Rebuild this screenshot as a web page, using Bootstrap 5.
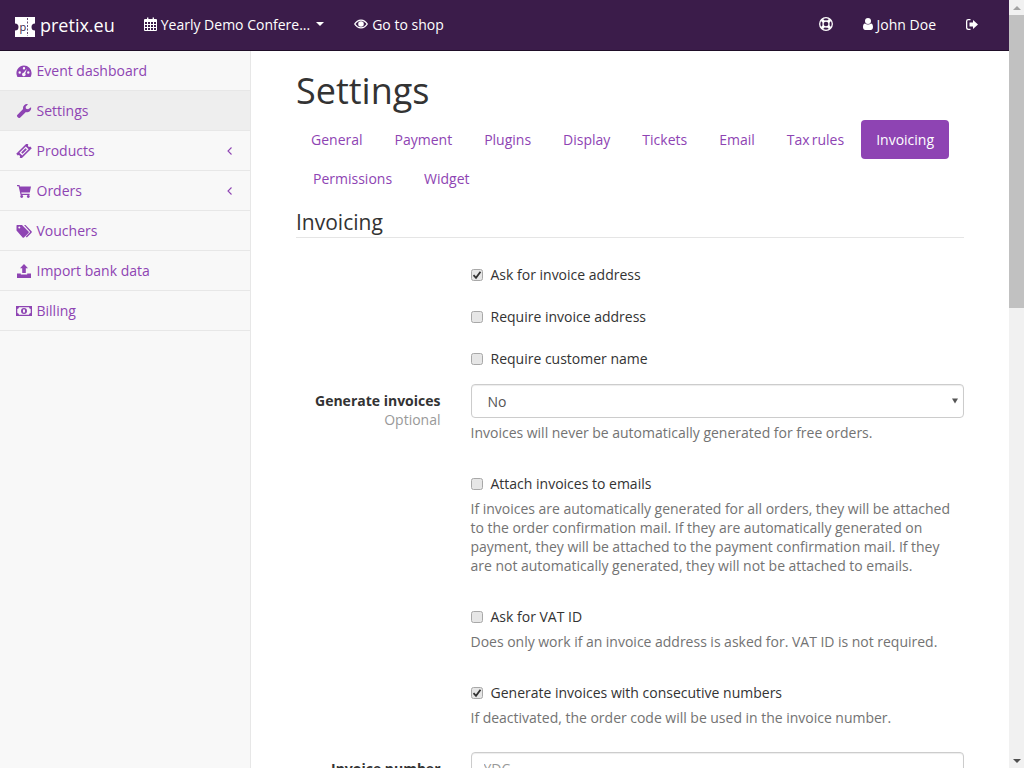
<!DOCTYPE html>
<html lang="en">
<head>
  <meta charset="UTF-8" />
  <meta name="viewport" content="width=device-width, initial-scale=1" />
  <title>Settings :: pretix.eu</title>
  <link href="https://cdn.jsdelivr.net/npm/bootstrap@5.3.3/dist/css/bootstrap.min.css" rel="stylesheet" />
  <style>
    html, body {
      height: 768px;
      overflow: hidden;
    }

    body {
      font-family: "Open Sans", "Liberation Sans", sans-serif;
      font-size: 14px;
      line-height: 19px;
      color: #333;
    }

    a {
      color: #8e44b3;
      text-decoration: none;
    }

    .no-squeeze {
      min-width: 0;
      min-height: 0;
    }

    /* top bar */
    .top-bar {
      height: 51px;
      padding: 0;
      background-color: #3b1c4a;
      border-bottom: 1px solid #1f0e28;
      flex-wrap: nowrap;
    }

    .top-bar .navbar-brand {
      display: flex;
      align-items: center;
      gap: 5px;
      height: 50px;
      margin: 0;
      padding: 0 14px 0 15px;
      font-size: 18px;
      line-height: 50px;
      color: #fff;
    }

    .brand-mark {
      margin-top: 4px;
    }

    .top-bar .nav-link {
      display: flex;
      align-items: center;
      height: 50px;
      padding: 0 15px 2px;
      color: #fff;
      font-size: 14px;
    }

    .top-bar svg {
      fill: #fff;
      flex: none;
    }

    .top-right {
      margin-right: 16px;
    }

    .user-glyph {
      margin-right: 4px;
    }

    .down-caret {
      width: 0;
      height: 0;
      margin-left: 6px;
      border-top: 4px solid #fff;
      border-left: 4px solid transparent;
      border-right: 4px solid transparent;
    }

    /* side menu */
    .side-menu {
      width: 251px;
      flex: none;
      background-color: #f8f8f8;
      border-right: 1px solid #e7e7e7;
    }

    .side-item {
      display: flex;
      align-items: center;
      height: 40px;
      padding: 0 15px 0 16px;
      border-bottom: 1px solid #e7e7e7;
    }

    .side-item svg {
      width: 16px;
      height: 14px;
      margin-right: 4.5px;
      fill: #8e44b3;
      flex: none;
    }

    .side-item.is-current {
      background-color: #eee;
    }

    .side-item svg.side-chevron {
      width: 5px;
      height: 8px;
      margin: 0 3px 0 auto;
      fill: none;
      stroke: #8e44b3;
      stroke-width: 1.1;
    }

    /* main column */
    .main-area {
      flex: 1;
      min-width: 0;
      padding: 0 45px;
    }

    .page-title {
      margin: 20px 0 9px;
      font-size: 36px;
      line-height: 39.6px;
      font-weight: 400;
    }

    .tab-pills {
      margin-bottom: 10px;
      word-spacing: -1.5px;
    }

    .tab-pills .nav-item + .nav-item {
      margin-left: 2px;
    }

    .tab-pills .nav-link {
      padding: 10px 15px;
      color: #8e44b3;
      border-radius: 4px;
      font-size: 14px;
    }

    .tab-pills .nav-link.active {
      background-color: #8e44b3;
      color: #fff;
    }

    .form-legend {
      margin-bottom: 20px;
      font-size: 21px;
      line-height: 29px;
      border-bottom: 1px solid #e5e5e5;
    }

    .form-line {
      --bs-gutter-x: 30px;
      margin-bottom: 15px;
    }

    .line-label {
      padding-top: 7px;
      text-align: right;
      font-weight: 700;
    }

    .line-label span {
      display: block;
      font-weight: 400;
      color: #999;
    }

    .tick-line {
      display: flex;
      align-items: flex-start;
      min-height: 27px;
      padding-top: 7px;
    }

    .tick-line input {
      appearance: none;
      width: 12px;
      height: 12px;
      margin: 4px 7.5px 0 .5px;
      background: #e6e6e6 no-repeat center;
      border: 1px solid #a8a8a8;
      border-radius: 2.5px;
      flex: none;
    }

    .tick-line input:checked {
      background-image: url("data:image/svg+xml,%3Csvg xmlns='http://www.w3.org/2000/svg' viewBox='0 0 10 10'%3E%3Cpath d='M1.500 5.200 4 7.800 8.500 1.800' fill='none' stroke='%23333' stroke-width='1.800'/%3E%3C/svg%3E");
      background-size: 10px 10px;
    }

    .help-line {
      margin: 5px 0 10px;
      color: #737373;
      word-spacing: -.1px;
    }

    .field-box {
      height: 34px;
      padding: 6px 12px;
      font-size: 14px;
      line-height: 19px;
      color: #555;
      border: 1px solid #ccc;
      border-radius: 4px;
      box-shadow: inset 0 1px 1px rgba(0, 0, 0, .075);
    }

    select.field-box {
      appearance: none;
      padding: 7px 12px 5px 16px;
      background: #fff url("data:image/svg+xml,%3Csvg xmlns='http://www.w3.org/2000/svg' viewBox='0 0 6 6'%3E%3Cpath d='M0 .5h6L3 5.500z' fill='%23555'/%3E%3C/svg%3E") no-repeat right 5px center / 6px 6px;
    }

    .field-box::placeholder {
      color: #999;
    }

    /* scrollbar */
    .fake-scroll {
      width: 15px;
      flex: none;
      display: flex;
      flex-direction: column;
      align-items: center;
      background-color: #f1f1f1;
    }

    .fake-scroll .scroll-end {
      height: 15px;
      width: 100%;
      display: flex;
      align-items: center;
      justify-content: center;
      flex: none;
    }

    .fake-scroll .scroll-thumb {
      width: 100%;
      height: 293px;
      flex: none;
      background-color: #c1c1c1;
    }

    .scroll-end.up::before,
    .scroll-end.down::before {
      content: "";
      border-left: 4px solid transparent;
      border-right: 4px solid transparent;
    }

    .scroll-end.up::before {
      border-bottom: 4px solid #a3a3a3;
    }

    .scroll-end.down::before {
      border-top: 4px solid #505050;
    }
  </style>
</head>
<body>

  <div class="d-flex vh-100">
    <div class="flex-grow-1 d-flex flex-column no-squeeze">

      <!-- Top bar -->
      <nav class="navbar top-bar">
        <a class="navbar-brand" href="#">
          <svg class="brand-mark" width="20" height="20" viewBox="0 0 20 20">
            <path d="M0 0h20v6.500a3.500 3.500 0 0 0 0 7V20H0v-6.500a3.500 3.500 0 0 0 0-7z"/>
            <text x="4.500" y="14" font-size="11" font-family="'Open Sans', sans-serif" fill="#3b1c4a">p</text>
            <path d="M12.500 1v18" fill="none" stroke="#3b1c4a" stroke-width=".8" stroke-dasharray="2 1.500"/>
          </svg>
          pretix.eu
        </a>
        <ul class="navbar-nav flex-row me-auto">
          <li class="nav-item">
            <a class="nav-link" href="#">
              <svg class="me-1" width="13" height="14" viewBox="0 0 13 14"><path d="M1 2h2V.6h1.400V2h4.200V.6H10V2h2a1 1 0 0 1 1 1v10a1 1 0 0 1-1 1H1a1 1 0 0 1-1-1V3a1 1 0 0 1 1-1zm0 3v2h2V5zm3 0v2h2V5zm3 0v2h2V5zm3 0v2h2V5zM1 8v2h2V8zm3 0v2h2V8zm3 0v2h2V8zm3 0v2h2V8zM1 11v2h2v-2zm3 0v2h2v-2zm3 0v2h2v-2zm3 0v2h2v-2z" fill-rule="evenodd"/></svg>
              Yearly Demo Confere...
              <span class="down-caret"></span>
            </a>
          </li>
          <li class="nav-item">
            <a class="nav-link" href="#">
              <svg class="me-1" width="14" height="12" viewBox="0 0 14 12"><path d="M7 1.500c3 0 5.500 1.800 7 4.500-1.500 2.700-4 4.500-7 4.500S1.500 8.700 0 6c1.500-2.700 4-4.500 7-4.500zm0 1.200C4.800 2.700 2.800 4 1.500 6 2.800 8 4.800 9.300 7 9.300S11.200 8 12.500 6C11.200 4 9.200 2.700 7 2.700zM7 3.200A2.800 2.800 0 1 1 7 8.800 2.800 2.800 0 0 1 7 3.200z" fill-rule="evenodd"/></svg>
              Go to shop
            </a>
          </li>
        </ul>
        <ul class="navbar-nav flex-row top-right">
          <li class="nav-item">
            <a class="nav-link" href="#">
              <svg width="14" height="14" viewBox="0 0 14 14">
                <g fill="none" stroke="#fff">
                  <circle cx="7" cy="7" r="6.300" stroke-width="1.300"/>
                  <circle cx="7" cy="7" r="3" stroke-width="1.300"/>
                  <path d="M2.800 2.800 5 5M11.200 2.800 9 5M2.800 11.200 5 9M11.200 11.200 9 9" stroke-width="3"/>
                </g>
              </svg>
            </a>
          </li>
          <li class="nav-item">
            <a class="nav-link" href="#">
              <svg class="user-glyph" width="10" height="12" viewBox="0 0 10 12"><circle cx="5" cy="3" r="3"/><path d="M2 5.500c.8.700 1.800 1 3 1s2.200-.3 3-1c1.300.2 2 1.500 2 3.500 0 1.800-1 3-2.300 3H2.300C1 12 0 10.800 0 9c0-2 .7-3.300 2-3.500z"/></svg>
              John Doe
            </a>
          </li>
          <li class="nav-item">
            <a class="nav-link" href="#">
              <svg width="12" height="11" viewBox="0 0 12 11"><path d="M4.500 0v1.300H2.400c-.6 0-1.100.5-1.100 1.100v6.200c0 .6.500 1.100 1.100 1.100h2.100V11H2.300A2.300 2.300 0 0 1 0 8.700V2.300A2.300 2.300 0 0 1 2.300 0z"/><path d="M7 1l5 4.500L7 10V7.500H3.500v-4H7z"/></svg>
            </a>
          </li>
        </ul>
      </nav>

      <div class="d-flex flex-grow-1 no-squeeze">

        <!-- Side menu -->
        <div class="side-menu">
          <a class="side-item" href="#">
            <svg viewBox="0 0 16 14"><path d="M8 1.500a7.600 7.600 0 0 1 7.600 7.600c0 1.300-.3 2.500-.9 3.600-.1.200-.3.300-.5.300H1.800c-.2 0-.4-.1-.5-.3A7.600 7.600 0 0 1 8 1.500zM8 3a1.200 1.200 0 1 0 0 2.400A1.200 1.200 0 0 0 8 3zM3.700 7.300a1.200 1.200 0 1 0 0 2.400 1.200 1.200 0 0 0 0-2.400zm8.600 0a1.200 1.200 0 1 0 0 2.400 1.200 1.200 0 0 0 0-2.400zM10.800 5 7.600 8.800a1.700 1.700 0 1 0 1.600.7z" fill-rule="evenodd"/></svg>
            Event dashboard
          </a>
          <a class="side-item is-current" href="#">
            <svg viewBox="0 0 16 14"><path d="M15 3.200c.1.400.2.700.2 1a4 4 0 0 1-5.300 3.700L4.300 13.500a1.500 1.500 0 0 1-2.200 0l-.6-.6a1.500 1.500 0 0 1 0-2.200L7.100 5A4 4 0 0 1 12 .2L9.600 2.700l.4 2.100 2.100.5z"/></svg>
            Settings
          </a>
          <a class="side-item" href="#">
            <svg viewBox="0 0 16 14"><g transform="rotate(-45 8 7)"><path d="M.5 3.500h15v2.200a1.300 1.300 0 0 0 0 2.600v2.200H.5V8.300a1.300 1.300 0 0 0 0-2.600zM3.500 5v4h9V5z" fill-rule="evenodd"/><path d="M5 6h6v2H5z"/></g></svg>
            Products
            <svg class="side-chevron" viewBox="0 0 5 8"><path d="M4.500.5 1 4l3.500 3.500"/></svg>
          </a>
          <a class="side-item" href="#">
            <svg viewBox="0 0 16 14"><path d="M1 1h2.500l.4 1.500H15l-1.200 6H5.300l.3 1.300h8v1.200H4.600L2.600 2.200H1z"/><circle cx="5.700" cy="12.500" r="1.400"/><circle cx="12.300" cy="12.500" r="1.400"/></svg>
            Orders
            <svg class="side-chevron" viewBox="0 0 5 8"><path d="M4.500.5 1 4l3.500 3.500"/></svg>
          </a>
          <a class="side-item" href="#">
            <svg viewBox="0 0 16 14"><path d="M1 1h5l6.500 6.500a1 1 0 0 1 0 1.400L8 13.400a1 1 0 0 1-1.400 0L.5 6.500V1.500zM3.300 2.500a1 1 0 1 0 0 2 1 1 0 0 0 0-2z" fill-rule="evenodd"/><path d="M8 1h1.500l6 6.300a1 1 0 0 1 0 1.400l-4.700 4.700-1-1 4.400-4.400z"/></svg>
            Vouchers
          </a>
          <a class="side-item" href="#">
            <svg viewBox="0 0 16 14"><path d="M8 0l4 4.300H9.800V9H6.200V4.300H4z"/><path d="M1 9.500h3.800v1h6.400v-1H15V14H1z"/></svg>
            Import bank data
          </a>
          <a class="side-item" href="#">
            <svg viewBox="0 0 16 14"><path d="M0 2h16v10H0zm3 1.300A2 2 0 0 1 1.300 5v4A2 2 0 0 1 3 10.700h10A2 2 0 0 1 14.700 9V5A2 2 0 0 1 13 3.300zM8 4a3 3 0 1 1 0 6 3 3 0 0 1 0-6zM7 5.500v3h2v-3z" fill-rule="evenodd"/></svg>
            Billing
          </a>
        </div>

        <!-- Main content -->
        <div class="main-area">
          <h1 class="page-title">Settings</h1>

          <ul class="nav nav-pills tab-pills">
            <li class="nav-item"><a class="nav-link" href="#">General</a></li>
            <li class="nav-item"><a class="nav-link" href="#">Payment</a></li>
            <li class="nav-item"><a class="nav-link" href="#">Plugins</a></li>
            <li class="nav-item"><a class="nav-link" href="#">Display</a></li>
            <li class="nav-item"><a class="nav-link" href="#">Tickets</a></li>
            <li class="nav-item"><a class="nav-link" href="#">Email</a></li>
            <li class="nav-item"><a class="nav-link" href="#">Tax rules</a></li>
            <li class="nav-item"><a class="nav-link active" href="#">Invoicing</a></li>
            <li class="nav-item"><a class="nav-link" href="#">Permissions</a></li>
            <li class="nav-item"><a class="nav-link" href="#">Widget</a></li>
          </ul>

          <div class="form-legend">Invoicing</div>

          <div class="row form-line">
            <div class="col-9 offset-3"><label class="tick-line"><input type="checkbox" checked />Ask for invoice address</label></div>
          </div>
          <div class="row form-line">
            <div class="col-9 offset-3"><label class="tick-line"><input type="checkbox" />Require invoice address</label></div>
          </div>
          <div class="row form-line">
            <div class="col-9 offset-3"><label class="tick-line"><input type="checkbox" />Require customer name</label></div>
          </div>
          <div class="row form-line">
            <div class="col-3 line-label">Generate invoices<span>Optional</span></div>
            <div class="col-9">
              <select class="form-control field-box"><option>No</option></select>
              <div class="help-line">Invoices will never be automatically generated for free orders.</div>
            </div>
          </div>
          <div class="row form-line">
            <div class="col-9 offset-3">
              <label class="tick-line"><input type="checkbox" />Attach invoices to emails</label>
              <div class="help-line">If invoices are automatically generated for all orders, they will be attached to the order confirmation mail. If they are automatically generated on payment, they will be attached to the payment confirmation mail. If they are not automatically generated, they will not be attached to emails.</div>
            </div>
          </div>
          <div class="row form-line">
            <div class="col-9 offset-3">
              <label class="tick-line"><input type="checkbox" />Ask for VAT ID</label>
              <div class="help-line">Does only work if an invoice address is asked for. VAT ID is not required.</div>
            </div>
          </div>
          <div class="row form-line">
            <div class="col-9 offset-3">
              <label class="tick-line"><input type="checkbox" checked />Generate invoices with consecutive numbers</label>
              <div class="help-line">If deactivated, the order code will be used in the invoice number.</div>
            </div>
          </div>
          <div class="row form-line">
            <div class="col-3 line-label">Invoice number</div>
            <div class="col-9"><input class="form-control field-box" type="text" placeholder="YDC" /></div>
          </div>
        </div>
      </div>
    </div>

    <!-- Page scrollbar -->
    <div class="fake-scroll">
      <div class="scroll-end up"></div>
      <div class="scroll-thumb"></div>
      <div class="flex-grow-1"></div>
      <div class="scroll-end down"></div>
    </div>
  </div>

  <script src="https://cdn.jsdelivr.net/npm/bootstrap@5.3.3/dist/js/bootstrap.bundle.min.js"></script>
</body>
</html>
